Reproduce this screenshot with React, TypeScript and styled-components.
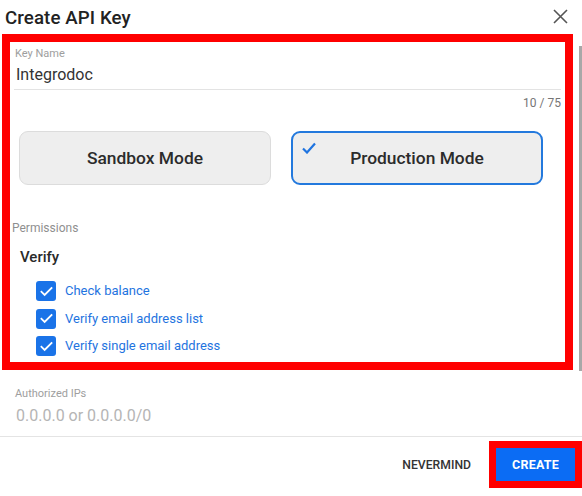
import React from "react";
import styled, { createGlobalStyle } from "styled-components";

const Global = createGlobalStyle`
  html, body { margin: 0; padding: 0; background: #fff; }
  body { font-family: Roboto, "Noto Sans", "Liberation Sans", sans-serif; }
  * { box-sizing: border-box; }
`;

const Dialog = styled.div`
  position: relative;
  width: 582px;
  height: 496px;
  background: #fff;
  overflow: hidden;
  display: flex;
  flex-direction: column;
`;

const Header = styled.div`
  height: 34px;
  display: flex;
  align-items: center;
  justify-content: space-between;
  padding: 0 14px 0 5px;
`;

const Title = styled.h2`
  margin: 0;
  font-size: 18.7px;
  font-weight: 500;
  color: #222;
  letter-spacing: 0.1px;
  padding-top: 1px;
`;

const CloseButton = styled.button`
  border: 0;
  background: none;
  padding: 0;
  width: 16px;
  height: 16px;
  display: flex;
  align-items: center;
  justify-content: center;
  margin-top: -1px;
  cursor: pointer;
`;

const Body = styled.div`
  flex: 1;
  display: flex;
  flex-direction: column;
`;

const Highlight = styled.section`
  margin-left: 2px;
  width: 571px;
  height: 336px;
  border: 8px solid #ff0000;
  display: flex;
  flex-direction: column;
`;

const KeyField = styled.div`
  padding-top: 5px;
`;

const FieldLabel = styled.label`
  display: block;
  font-size: 11px;
  line-height: 14px;
  color: #9e9e9e;
  padding-left: 5px;
`;

const TextInput = styled.div`
  margin: 0 4px;
  padding: 4px 2px 4px;
  font-size: 16px;
  line-height: 20px;
  color: #333;
  border-bottom: 1px solid #e3e3e3;
`;

const Counter = styled.div`
  margin: 0 4px;
  text-align: right;
  font-size: 12px;
  line-height: 14px;
  padding-top: 6px;
  color: #757575;
`;

const ModeRow = styled.div`
  display: grid;
  grid-template-columns: 252px 252px;
  gap: 20px;
  padding: 21px 0 0 9px;
`;

const ModeCard = styled.button<{ $active?: boolean }>`
  position: relative;
  height: 54px;
  border-radius: 9px;
  background: #eeeeee;
  border: ${(p) => (p.$active ? "2px solid #2379dd" : "1px solid #dcdcdc")};
  font-family: Roboto, "Noto Sans", sans-serif;
  font-size: 17.4px;
  font-weight: 500;
  color: #2b2b2b;
  display: flex;
  align-items: center;
  justify-content: center;
  padding: 0;
`;

const CardCheck = styled.span`
  position: absolute;
  left: 9px;
  top: 9px;
  width: 14px;
  height: 12px;
  display: flex;
`;

const SectionLabel = styled.div`
  font-size: 12px;
  line-height: 14px;
  color: #8f8f8f;
  padding: 36px 0 0 2px;
`;

const GroupTitle = styled.div`
  font-size: 15px;
  font-weight: 500;
  color: #2a2a2a;
  line-height: 18px;
  padding: 13px 0 0 10px;
`;

const CheckList = styled.ul`
  list-style: none;
  margin: 0;
  padding: 15px 0 0 26px;
  display: flex;
  flex-direction: column;
  gap: 7.5px;
`;

const CheckRow = styled.li`
  display: flex;
  align-items: center;
  gap: 9px;
  height: 20px;
`;

const Box = styled.span`
  width: 20px;
  height: 20px;
  border-radius: 3px;
  background: #1a73e8;
  display: flex;
  align-items: center;
  justify-content: center;
`;

const CheckText = styled.span`
  font-size: 13px;
  color: #1f74e0;
  line-height: 16px;
`;

const IpField = styled.div`
  padding: 17px 0 0 10px;
`;

const IpPlaceholder = styled.div`
  padding: 5px 0 0 6px;
  font-size: 16px;
  line-height: 20px;
  color: #b5b5b5;
`;

const Footer = styled.footer`
  margin-top: auto;
  height: 60px;
  border-top: 1px solid #e4e4e4;
  display: flex;
  align-items: flex-start;
  justify-content: flex-end;
  padding-top: 4px;
  gap: 18px;
`;

const TextButton = styled.button`
  border: 0;
  background: none;
  font-family: Roboto, "Noto Sans", sans-serif;
  font-size: 12.2px;
  font-weight: 500;
  color: #333;
  height: 47px;
  padding: 0;
`;

const PrimaryFrame = styled.div`
  border: 7px solid #ff0000;
  width: 93px;
  height: 47px;
`;

const PrimaryButton = styled.button`
  width: 100%;
  height: 100%;
  border: 0;
  background: #0b6cf4;
  color: #fff;
  font-family: Roboto, "Noto Sans", sans-serif;
  font-size: 12.5px;
  font-weight: 700;
  letter-spacing: 0.2px;
  padding: 0;
`;

const ScrollThumb = styled.div`
  position: absolute;
  right: 0;
  top: 46px;
  width: 3px;
  height: 325px;
  background: #a8a8a8;
`;

const Tick = ({ color, w = 12 }: { color: string; w?: number }) => (
  <svg width={w} height={w} viewBox="0 0 24 24" fill="none">
    <path d="M4 12.5l5 5L20 6.5" stroke={color} strokeWidth={3} strokeLinecap="square" />
  </svg>
);

const permissions = ["Check balance", "Verify email address list", "Verify single email address"];

export default function App() {
  return (
    <Dialog>
      <Global />
      <Header>
        <Title>Create API Key</Title>
        <CloseButton aria-label="close">
          <svg width="15" height="15" viewBox="0 0 15 15">
            <path d="M1 1l13 13M14 1L1 14" stroke="#555" strokeWidth="1.6" />
          </svg>
        </CloseButton>
      </Header>
      <Body>
        <Highlight>
          <KeyField>
            <FieldLabel>Key Name</FieldLabel>
            <TextInput>Integrodoc</TextInput>
            <Counter>10 / 75</Counter>
          </KeyField>
          <ModeRow>
            <ModeCard>Sandbox Mode</ModeCard>
            <ModeCard $active>
              <CardCheck>
                <svg width="14" height="12" viewBox="0 0 14 12" fill="none">
                  <path d="M1 6.5l4 4L13 1.5" stroke="#1f74e0" strokeWidth="2.2" />
                </svg>
              </CardCheck>
              Production Mode
            </ModeCard>
          </ModeRow>
          <SectionLabel>Permissions</SectionLabel>
          <GroupTitle>Verify</GroupTitle>
          <CheckList>
            {permissions.map((p) => (
              <CheckRow key={p}>
                <Box>
                  <Tick color="#fff" w={15} />
                </Box>
                <CheckText>{p}</CheckText>
              </CheckRow>
            ))}
          </CheckList>
        </Highlight>
        <IpField>
          <FieldLabel as="div">Authorized IPs</FieldLabel>
          <IpPlaceholder>0.0.0.0 or 0.0.0.0/0</IpPlaceholder>
        </IpField>
        <Footer>
          <TextButton>NEVERMIND</TextButton>
          <PrimaryFrame>
            <PrimaryButton>CREATE</PrimaryButton>
          </PrimaryFrame>
        </Footer>
      </Body>
      <ScrollThumb />
    </Dialog>
  );
}
